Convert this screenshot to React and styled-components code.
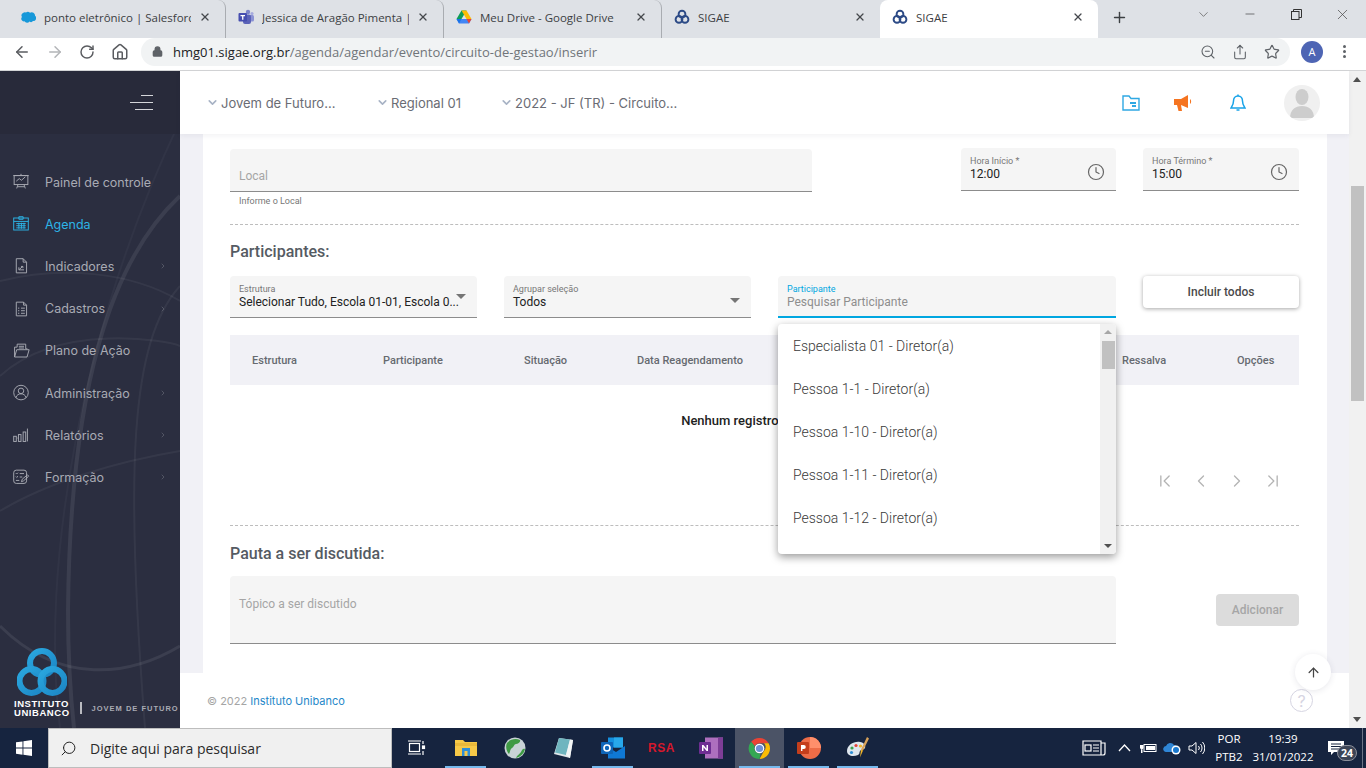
import React from "react";
import styled, { createGlobalStyle } from "styled-components";
import {
  ArrowLeft,
  ArrowRight,
  RotateCw,
  Home,
  Lock,
  ZoomOut,
  Share,
  Star,
  X,
  Plus,
  ChevronDown,
  ChevronRight,
  ChevronLeft,
  ChevronFirst,
  ChevronLast,
  Minus,
  ArrowUp,
  Clock,
  Search,
} from "lucide-react";

const GlobalStyle = createGlobalStyle`
  html, body { margin: 0; padding: 0; height: 100%; overflow: hidden; }
  body { font-family: Roboto, "Liberation Sans", sans-serif; }
  #root { height: 768px; }
  * { box-sizing: border-box; }
`;

const Page = styled.div`
  width: 1366px;
  height: 768px;
  display: flex;
  flex-direction: column;
  overflow: hidden;
  background: #fff;
`;

/* chrome */
const TabBar = styled.div`
  height: 38px;
  background: #dee1e6;
  display: flex;
  padding-left: 8px;
  flex: none;
`;

const Tab = styled.div`
  width: 218px;
  height: 38px;
  display: flex;
  align-items: center;
  padding: 0 14px 4px 12px;
  gap: 8px;
  position: relative;
  background: ${(p) => (p.$active ? "#fff" : "transparent")};
  border-radius: 8px 8px 0 0;
  border-right: ${(p) => (p.$sep ? "1px solid #a9acb1" : "none")};
  background-clip: ${(p) => (p.$active ? "border-box" : "padding-box")};
`;

const TabTitle = styled.span`
  flex: 1;
  font-family: "Open Sans", sans-serif;
  font-size: 11.5px;
  color: #3c4043;
  white-space: nowrap;
  overflow: hidden;
`;

const NewTab = styled.div`
  width: 42px;
  display: flex;
  align-items: center;
  justify-content: center;
  padding-bottom: 4px;
  color: #3c4043;
`;

const WindowControls = styled.div`
  margin-left: auto;
  display: flex;
  align-items: flex-start;
  color: #444;
`;

const WinButton = styled.div`
  width: 46.5px;
  height: 28px;
  display: flex;
  align-items: center;
  justify-content: center;
`;

const Toolbar = styled.div`
  height: 33px;
  flex: none;
  display: flex;
  padding: 0 0 5px 6px;
  border-bottom: 1px solid #d3d4d6;
  align-items: center;
`;

const NavButton = styled.div`
  width: 32.5px;
  display: flex;
  justify-content: center;
  color: ${(p) => (p.$off ? "#b3b5b8" : "#5a5c60")};
`;

const Omnibox = styled.div`
  width: 1149px;
  height: 28px;
  margin-left: 5px;
  background: #f1f3f4;
  border-radius: 14px;
  display: flex;
  align-items: center;
  padding: 0 10px 0 11px;
  color: #5f6368;
`;

const Url = styled.div`
  margin-left: 10px;
  font-family: "Open Sans", sans-serif;
  font-size: 13px;
  color: #70757a;
  flex: 1;
  span { color: #202124; }
`;

const OmniIcons = styled.div`
  display: flex;
  gap: 16px;
  align-items: center;
`;

const ProfileDot = styled.div`
  width: 22px;
  height: 22px;
  margin-left: 11px;
  border-radius: 50%;
  background: #4e65b4;
  color: #fff;
  font-size: 11px;
  display: flex;
  align-items: center;
  justify-content: center;
  font-family: "Open Sans", sans-serif;
`;

const Dots = styled.div`
  margin-left: 20px;
  display: flex;
  flex-direction: column;
  gap: 2px;
  i { width: 3px; height: 3px; border-radius: 50%; background: #5f6368; }
`;

/* app */
const AppArea = styled.div`
  flex: 1;
  min-height: 0;
  display: flex;
  position: relative;
`;

const Sidebar = styled.aside`
  width: 180px;
  flex: none;
  background: #2b2e40;
  display: flex;
  flex-direction: column;
  position: relative;
  overflow: hidden;
`;

const SidebarArt = styled.svg`
  position: absolute;
  left: 0;
  top: 0;
  pointer-events: none;
`;

const SidebarHead = styled.div`
  height: 63px;
  flex: none;
  background: #282a3a;
  display: flex;
  align-items: center;
  justify-content: flex-end;
  padding-right: 27px;
  position: relative;
`;

const Burger = styled.div`
  width: 23px;
  display: flex;
  flex-direction: column;
  align-items: flex-end;
  gap: 6px;
  i { display: block; height: 1px; background: #d5d6da; }
  i:nth-child(1) { width: 12px; }
  i:nth-child(2) { width: 23px; }
  i:nth-child(3) { width: 18px; }
`;

const Nav = styled.nav`
  margin-top: 27px;
  position: relative;
`;

const NavItem = styled.div`
  height: 42.2px;
  display: flex;
  align-items: center;
  padding-left: 12px;
  color: ${(p) => (p.$active ? "#2db4e6" : "#a9abb4")};
  font-family: Inter, sans-serif;
  font-size: 12.5px;
  position: relative;
`;

const NavLabel = styled.span`
  margin-left: 15px;
  flex: 1;
`;

const NavCaret = styled.span`
  width: 21px;
  display: flex;
  color: #666977;
`;

const BrandBlock = styled.div`
  margin-top: auto;
  padding: 0 0 11px 14px;
  position: relative;
  display: flex;
  flex-direction: column;
`;

const BrandRow = styled.div`
  display: flex;
  align-items: center;
  margin-top: 1px;
`;

const BrandName = styled.div`
  font-family: "Liberation Sans", sans-serif;
  font-weight: 700;
  font-size: 9.5px;
  line-height: 9px;
  letter-spacing: 0.55px;
  color: #fff;
`;

const BrandDivider = styled.div`
  width: 2px;
  height: 12px;
  background: #b9bac0;
  margin: 0 10px;
`;

const BrandTag = styled.div`
  font-family: "Liberation Sans", sans-serif;
  font-weight: 700;
  font-size: 7.5px;
  letter-spacing: 1px;
  color: #a9abb4;
  white-space: nowrap;
`;

const Main = styled.main`
  flex: 1;
  min-width: 0;
  display: flex;
  flex-direction: column;
  background: #f1f1f6;
  position: relative;
`;

const TopBar = styled.header`
  height: 63px;
  flex: none;
  background: #fff;
  display: flex;
  align-items: center;
  padding: 0 29px 0 26px;
  box-shadow: 0 2px 5px rgba(40, 40, 70, 0.06);
  position: relative;
  z-index: 2;
`;

const Crumb = styled.div`
  width: ${(p) => p.$w}px;
  display: flex;
  align-items: center;
  gap: 2px;
  font-family: Inter, sans-serif;
  font-size: 13px;
  color: #6a6c74;
  white-space: nowrap;
  svg { color: #a8b3c5; flex: none; }
`;

const TopIcons = styled.div`
  margin-left: auto;
  display: flex;
  align-items: center;
`;

const TopIcon = styled.div`
  width: ${(p) => p.$w}px;
  display: flex;
  justify-content: center;
`;

const UserBubble = styled.div`
  width: 36px;
  height: 36px;
  border-radius: 50%;
  background: #f0f0f0;
  margin-left: 19px;
  display: flex;
  align-items: center;
  justify-content: center;
  overflow: hidden;
`;

const Scroller = styled.div`
  flex: 1;
  min-height: 0;
  overflow: hidden;
  padding: 0 22px 0 23px;
`;

const Card = styled.section`
  background: #fff;
  padding: 14px 28px 0 27px;
  height: 620px;
`;

const TopRow = styled.div`
  display: flex;
  justify-content: space-between;
  align-items: flex-start;
`;

const FieldBox = styled.div`
  position: relative;
  width: ${(p) => p.$w}px;
  height: ${(p) => p.$h}px;
  background: #f5f5f5;
  border-radius: 4px 4px 0 0;
  border-bottom: ${(p) => (p.$focus ? "2px solid #00a7e1" : "1px solid #8c8c8c")};
  padding: ${(p) => p.$pad || "8px 9px 0"};
  display: flex;
  flex-direction: column;
`;

const LocalColumn = styled.div`
  margin-top: 1px;
`;

const Placeholder = styled.div`
  font-size: 12px;
  line-height: 14px;
  color: ${(p) => p.$c || "#a5a5a5"};
`;

const Helper = styled.div`
  font-size: 9px;
  color: #777;
  padding: 3px 9px 0;
  line-height: 12px;
`;

const TimeFields = styled.div`
  display: flex;
  gap: 27px;
`;

const MiniLabel = styled.div`
  font-size: 9px;
  line-height: 11px;
  color: ${(p) => p.$c || "#777"};
`;

const FieldValue = styled.div`
  font-size: 12px;
  line-height: 14px;
  color: #222;
  white-space: nowrap;
`;

const FieldIcon = styled.div`
  position: absolute;
  right: 11px;
  top: 15px;
  color: #666;
  display: flex;
`;

const Caret = styled.div`
  position: absolute;
  right: ${(p) => p.$r}px;
  top: ${(p) => p.$t}px;
  width: 0;
  height: 0;
  border-left: 5px solid transparent;
  border-right: 5px solid transparent;
  border-top: 5px solid #757575;
`;

const Dashed = styled.div`
  border-top: 1px dashed #bdbdbd;
  margin-top: ${(p) => p.$mt}px;
`;

const SectionTitle = styled.h3`
  margin: ${(p) => p.$mt}px 0 ${(p) => p.$mb}px;
  font-size: 16px;
  line-height: 20px;
  font-weight: 500;
  color: #555b63;
`;

const FilterRow = styled.div`
  display: flex;
  gap: 27px;
  align-items: flex-start;
`;

const IncludeButton = styled.button`
  width: 156px;
  height: 32px;
  border: none;
  background: #fff;
  border-radius: 4px;
  font-family: Roboto, sans-serif;
  font-weight: 500;
  font-size: 12px;
  color: #4a4a4a;
  box-shadow: 0 1px 4px rgba(0, 0, 0, 0.35);
`;

const Dropdown = styled.div`
  position: absolute;
  left: 0;
  top: 48px;
  width: 338px;
  height: 230px;
  background: #fff;
  border-radius: 4px;
  box-shadow: 0 3px 9px rgba(0, 0, 0, 0.4);
  z-index: 5;
  display: flex;
  overflow: hidden;
`;

const OptionList = styled.div`
  flex: 1;
  padding-top: 0;
`;

const Option = styled.div`
  height: 43px;
  padding-left: 15px;
  display: flex;
  align-items: center;
  font-size: 14px;
  font-weight: 300;
  color: #3a3a3a;
`;

const DropScroll = styled.div`
  width: 16px;
  background: #f1f1f1;
  position: relative;
  padding-top: 17px;
  display: flex;
  justify-content: center;
`;

const DropThumb = styled.div`
  width: 13px;
  height: 28px;
  background: #c1c1c1;
`;

const ArrowGlyph = styled.div`
  position: absolute;
  left: 4px;
  width: 0;
  height: 0;
  border-left: 4px solid transparent;
  border-right: 4px solid transparent;
  ${(p) =>
    p.$up
      ? "top: 6px; border-bottom: 4px solid #a6a6a6;"
      : "bottom: 6px; border-top: 4px solid #505050;"}
`;

const TableHead = styled.div`
  margin-top: 17px;
  height: 50px;
  background: #f1f1f6;
  display: grid;
  grid-template-columns: 131px 141px 113px 485px 115px 1fr;
  align-items: center;
  padding-left: 22px;
  font-size: 11px;
  font-weight: 500;
  color: #666a70;
`;

const EmptyRow = styled.div`
  height: 71px;
  display: flex;
  align-items: center;
  justify-content: center;
  font-size: 13px;
  font-weight: 500;
  color: #222;
`;

const Pager = styled.div`
  height: 50px;
  display: flex;
  align-items: center;
  justify-content: flex-end;
  padding-right: 8px;
  color: #b4b4b4;
`;

const PagerCount = styled.span`
  font-size: 12px;
  color: #2d8fd0;
  margin-right: 38px;
`;

const PagerIcon = styled.div`
  width: 36px;
  display: flex;
  justify-content: center;
`;

const TopicRow = styled.div`
  display: flex;
  align-items: center;
  justify-content: space-between;
`;

const AddButton = styled.button`
  width: 83px;
  height: 32px;
  border: none;
  border-radius: 4px;
  background: #dcdcdc;
  color: #a6a6a6;
  font-family: Roboto, sans-serif;
  font-size: 12px;
  font-weight: 500;
`;

const ClippedLine = styled.div`
  margin-top: 28px;
  padding-left: 70px;
  font-size: 15px;
  font-weight: 500;
  color: #555;
  white-space: nowrap;
`;

const Footer = styled.footer`
  height: 55px;
  flex: none;
  background: #fff;
  display: flex;
  align-items: center;
  justify-content: space-between;
  padding: 0 36px 0 27px;
  font-family: Inter, sans-serif;
  font-size: 11px;
  color: #a5a5a5;
  position: relative;
  z-index: 2;
  a { color: #1f88c9; text-decoration: none; }
`;

const HelpCircle = styled.div`
  width: 23px;
  height: 23px;
  border-radius: 50%;
  border: 1.5px solid #d6d5e2;
  color: #d6d5e2;
  font-size: 16px;
  display: flex;
  align-items: center;
  justify-content: center;
`;

const UpButton = styled.div`
  position: absolute;
  right: 18px;
  bottom: 38px;
  width: 36px;
  height: 36px;
  border-radius: 50%;
  background: #fff;
  color: #444;
  display: flex;
  align-items: center;
  justify-content: center;
  box-shadow: 0 1px 6px rgba(60, 60, 90, 0.12);
  z-index: 3;
`;

const PageScroll = styled.div`
  width: 17px;
  flex: none;
  background: #f1f1f1;
  position: relative;
  padding-top: 115px;
  display: flex;
  justify-content: center;
`;

const PageThumb = styled.div`
  width: 13px;
  height: 215px;
  background: #c1c1c1;
`;

const PageArrow = styled.div`
  position: absolute;
  left: 4px;
  width: 0;
  height: 0;
  border-left: 4.5px solid transparent;
  border-right: 4.5px solid transparent;
  ${(p) =>
    p.$up
      ? "top: 6px; border-bottom: 5px solid #505050;"
      : "bottom: 6px; border-top: 5px solid #505050;"}
`;

/* windows taskbar */
const Taskbar = styled.div`
  height: 40px;
  flex: none;
  background: #16243f;
  display: flex;
  align-items: stretch;
  color: #fff;
`;

const StartButton = styled.div`
  width: 48px;
  display: flex;
  align-items: center;
  justify-content: center;
`;

const SearchBox = styled.div`
  width: 344px;
  background: #f0f0f0;
  border: 1px solid #bdbdbd;
  display: flex;
  align-items: center;
  padding-left: 11px;
  gap: 13px;
  font-family: "Open Sans", sans-serif;
  font-size: 14px;
  color: #2b2b2b;
  svg { transform: scaleX(-1); color: #222; }
`;

const TaskTile = styled.div`
  width: 49px;
  position: relative;
  display: flex;
  align-items: center;
  justify-content: center;
  background: ${(p) => (p.$current ? "#4b5366" : "transparent")};
  &::after {
    content: "";
    display: ${(p) => (p.$open ? "block" : "none")};
    position: absolute;
    left: 4px;
    right: 4px;
    bottom: 0;
    height: 2px;
    background: #76b9ed;
  }
`;

const RsaMark = styled.span`
  font-family: "Liberation Sans", sans-serif;
  font-weight: 700;
  font-size: 12px;
  letter-spacing: 0.5px;
  color: #d6182c;
`;

const Tray = styled.div`
  margin-left: auto;
  display: flex;
  align-items: center;
  font-family: "Open Sans", sans-serif;
  font-size: 11.5px;
  position: relative;
`;

const TrayIcon = styled.div`
  width: ${(p) => p.$w || 24}px;
  display: flex;
  justify-content: center;
  align-items: center;
`;

const TrayText = styled.div`
  width: ${(p) => p.$w}px;
  text-align: center;
  line-height: 18px;
`;

const Notice = styled.div`
  width: 46px;
  position: relative;
  display: flex;
  justify-content: center;
  padding-right: 6px;
`;

const NoticeBadge = styled.div`
  position: absolute;
  left: 21px;
  top: 4px;
  width: 20px;
  height: 16px;
  border-radius: 9px;
  background: #3c4456;
  border: 1px solid #8b8f9a;
  font-size: 10.5px;
  font-weight: 700;
  line-height: 14px;
  text-align: center;
`;

const ShowDesktop = styled.div`
  width: 4px;
  align-self: stretch;
  border-left: 1px solid #6b7486;
`;

const tabs = [
  { title: "ponto eletrônico | Salesforce", icon: "sf", sep: true },
  { title: "Jessica de Aragão Pimenta | Micr", icon: "teams", sep: true },
  { title: "Meu Drive - Google Drive", icon: "drive", sep: true },
  { title: "SIGAE", icon: "sigae" },
  { title: "SIGAE", icon: "sigae", active: true },
];

const Favicon = ({ kind }) => {
  if (kind === "sf")
    return (
      <svg width="16" height="16" viewBox="0 0 16 16">
        <path d="M6 3.5a3 3 0 0 1 4 .3 3.2 3.2 0 0 1 5 3 2.9 2.9 0 0 1-2 5.2 2.6 2.6 0 0 1-3.5.6 3 3 0 0 1-5-.3A2.6 2.6 0 0 1 2 8a2.6 2.6 0 0 1 1-4 3 3 0 0 1 3-.5z" fill="#1798d9" />
      </svg>
    );
  if (kind === "teams")
    return (
      <svg width="16" height="16" viewBox="0 0 16 16">
        <circle cx="10" cy="3" r="2.2" fill="#7b83c9" />
        <circle cx="14" cy="4.5" r="1.6" fill="#a4a9de" />
        <rect x="11" y="6" width="5" height="6.5" rx="1.5" fill="#8b92d4" />
        <rect x="5" y="5.5" width="8" height="9.5" rx="2" fill="#5a62b8" />
        <rect x="0.5" y="4" width="8.5" height="8.5" rx="1" fill="#464eb0" />
        <path d="M2.5 6h4.5v1.2H5.4v3.6H4.1V7.2H2.5z" fill="#fff" />
      </svg>
    );
  if (kind === "drive")
    return (
      <svg width="16" height="16" viewBox="0 0 16 16">
        <path d="M5.5 1.5h5l-5 8.5H.5z" fill="#0f9d58" />
        <path d="M10.5 1.5l5 8.5h-5l-5-8.5z" fill="#fbbc04" />
        <path d="M.5 10h15l-2.5 4.5H3z" fill="#4285f4" />
        <path d="M.5 10h5L3 14.5z" fill="#1a73e8" />
        <path d="M10.5 10h5L13 14.5z" fill="#ea4335" />
      </svg>
    );
  return (
    <svg width="16" height="16" viewBox="0 0 16 16" fill="none" stroke="#2c4a86" strokeWidth="1.9">
      <circle cx="8" cy="5.2" r="3.4" />
      <circle cx="5" cy="10.4" r="3.4" />
      <circle cx="11" cy="10.4" r="3.4" />
    </svg>
  );
};

const menuIcons = {
  board: (
    <>
      <rect x="2.5" y="3" width="16" height="10.5" />
      <path d="M1.5 3h18M5 9.5l3.5-3 2.5 2 4.5-4M7 13.5L5.5 18M14 13.5l1.5 4.5M6.5 16h8M10.5 1v2" />
    </>
  ),
  calendar: (
    <>
      <rect x="2" y="3.5" width="17" height="14" />
      <path d="M2 7.5h17M8 2h5v3H8zM5 10h11M5 12.5h11M5 15h11M8 9v7M11 9v7M14 9v7" />
    </>
  ),
  doc: (
    <>
      <path d="M5 2h8l4 4v12.5H5zM13 2v4h4" />
      <path d="M8 15h6M8 15v-3M8.5 14.5l4-3.5M10.5 11h2.2v2" />
    </>
  ),
  form: (
    <>
      <path d="M5 2.5h8.5L17 6v12.5H5zM13.5 2.5V6H17" />
      <path d="M10.5 9.5H15M10.5 12.5H15M10.5 15.5H15M7 9.5h1.5M7 12.5h1.5M7 15.5h1.5" />
    </>
  ),
  folder: (
    <>
      <path d="M3 17.5V6h3V2.5h10V8h2" />
      <path d="M8 5h6M8 7h6" />
      <path d="M3 17.5h14.5L20 9H5.5z" />
    </>
  ),
  user: (
    <>
      <circle cx="10.5" cy="10" r="8.5" />
      <circle cx="10.5" cy="8" r="3.2" />
      <path d="M4.5 16c1-3.5 3.500-4.500 6-4.500s5 1 6 4.500" />
    </>
  ),
  chart: (
    <>
      <rect x="2" y="12" width="3" height="6" />
      <rect x="7" y="14" width="0.1" height="0.1" />
      <rect x="7.500" y="10" width="3" height="8" />
      <rect x="13" y="7" width="3" height="11" />
      <path d="M18 3v15" />
    </>
  ),
  task: (
    <>
      <rect x="2" y="2.500" width="15" height="15.500" rx="3" />
      <path d="M4.500 6l1 1 1.500-1.500M4.500 10l1 1 1.500-1.500M9 6.500h5M9 10.500h3M4.500 14.500h4M11 16l1-3 6-5 1.500 1.500-6 5.500z" />
    </>
  ),
};

const menu = [
  { label: "Painel de controle", icon: "board" },
  { label: "Agenda", icon: "calendar", active: true },
  { label: "Indicadores", icon: "doc", more: true },
  { label: "Cadastros", icon: "form", more: true },
  { label: "Plano de Ação", icon: "folder" },
  { label: "Administração", icon: "user", more: true },
  { label: "Relatórios", icon: "chart", more: true },
  { label: "Formação", icon: "task", more: true },
];

const columns = ["Estrutura", "Participante", "Situação", "Data Reagendamento", "Ressalva", "Opções"];

const options = [
  "Especialista 01 - Diretor(a)",
  "Pessoa 1-1 - Diretor(a)",
  "Pessoa 1-10 - Diretor(a)",
  "Pessoa 1-11 - Diretor(a)",
  "Pessoa 1-12 - Diretor(a)",
];

const BrandLogo = () => (
  <svg width="50" height="50" viewBox="0 0 50 50" fill="none" style={{ marginLeft: 3 }}>
    <defs>
      <linearGradient id="lg" x1="0" y1="0" x2="1" y2="1">
        <stop offset="0" stopColor="#2aa7df" />
        <stop offset="1" stopColor="#1c86c4" />
      </linearGradient>
    </defs>
    <g stroke="url(#lg)" strokeWidth="6">
      <circle cx="25" cy="15" r="12" />
      <circle cx="14.500" cy="33" r="12" />
      <circle cx="35.500" cy="33" r="12" />
    </g>
  </svg>
);

const TaskIcons = {
  view: (
    <svg width="18" height="16" viewBox="0 0 18 16" fill="none" stroke="#fff" strokeWidth="1.2">
      <rect x="1.500" y="3.500" width="10" height="8" />
      <path d="M0 1h13M0 14h13M15 1v3M15 11v4" />
      <rect x="14.500" y="6" width="2" height="2.500" fill="#fff" />
    </svg>
  ),
  folder: (
    <svg width="22" height="18" viewBox="0 0 22 18">
      <path d="M0 1h8l2 2h12v14H0z" fill="#f7c948" />
      <rect x="0" y="4" width="22" height="3" fill="#eab93a" />
      <rect x="7" y="9" width="8" height="8" fill="#2f8fd6" />
      <rect x="9.500" y="12" width="3" height="5" fill="#f7c948" />
    </svg>
  ),
  globe: (
    <svg width="22" height="22" viewBox="0 0 22 22">
      <circle cx="11" cy="11" r="10.500" fill="#c9d3d6" />
      <path d="M3 6c3-4 9-5 13-3 1 2-2 4-4 4s-2 3-4 4-2 5-3 6C3 15 1 10 3 6zM12 21c4-1 8-4 9-9-2-1-3 1-4 3s-4 3-5 6z" fill="#3f9a44" />
    </svg>
  ),
  note: (
    <svg width="22" height="22" viewBox="0 0 22 22">
      <path d="M6 1l14 2-3 18L1 17z" fill="#dfe7ea" />
      <path d="M6 1l11 1.500L13 18 2 15.500z" fill="#6fb5bf" />
      <path d="M13 18l4 3 3-18-3-.5z" fill="#f2f5f5" />
    </svg>
  ),
  outlook: (
    <svg width="24" height="22" viewBox="0 0 24 22">
      <rect x="7" y="0.500" width="15" height="10" fill="#1490df" />
      <rect x="13" y="0.500" width="9" height="10" fill="#28a8ea" />
      <path d="M7 10l8 5 9-6v12.500H7z" fill="#0f78d4" />
      <rect x="0" y="5" width="12" height="12" rx="1" fill="#0e65b8" />
      <circle cx="6" cy="11" r="3" fill="none" stroke="#fff" strokeWidth="1.600" />
    </svg>
  ),
  onenote: (
    <svg width="24" height="22" viewBox="0 0 24 22">
      <rect x="6" y="0.500" width="18" height="21" fill="#ad6fbe" />
      <rect x="19" y="0.500" width="5" height="21" fill="#7d3d96" />
      <rect x="0" y="5" width="12" height="12" rx="1" fill="#6d2e92" />
      <path d="M3 14V8h1.500l3 3.800V8H9v6H7.600L4.500 10.200V14z" fill="#fff" />
    </svg>
  ),
  chrome: (
    <svg width="23" height="23" viewBox="0 0 48 48">
      <path d="M24 2a22 22 0 0 1 19 11H24a11 11 0 0 0-10 6L6.500 10A22 22 0 0 1 24 2z" fill="#ea4335" />
      <path d="M43 13a22 22 0 0 1-19 33l9.500-17a11 11 0 0 0 0-16z" fill="#fbbc04" />
      <path d="M24 46A22 22 0 0 1 6.500 10L14 19a11 11 0 0 0 12 15z" fill="#34a853" />
      <circle cx="24" cy="24" r="10" fill="#fff" />
      <circle cx="24" cy="24" r="7.500" fill="#6f8fd8" />
    </svg>
  ),
  ppt: (
    <svg width="24" height="22" viewBox="0 0 24 22">
      <circle cx="13" cy="11" r="11" fill="#ed6c47" />
      <path d="M13 0a11 11 0 0 1 11 11H13z" fill="#ff8f6b" />
      <rect x="0" y="5" width="12" height="12" rx="1" fill="#c43e1c" />
      <path d="M4 14V8h2.800a2 2 0 0 1 0 4H5.400v2z" fill="#fff" />
    </svg>
  ),
  paint: (
    <svg width="24" height="24" viewBox="0 0 24 24">
      <path d="M1 15C1 9 8 5 14 6c4 .7 6 3 5 6-1 2-4 1-5 3s0 3-2 4c-5 2-11 1-11-4z" fill="#dfe7ee" />
      <circle cx="6" cy="12" r="1.600" fill="#3fa34d" />
      <circle cx="10" cy="9.500" r="1.600" fill="#e6453a" />
      <circle cx="14.500" cy="10" r="1.600" fill="#f0b429" />
      <circle cx="5.500" cy="16.500" r="1.600" fill="#2f8fd6" />
      <path d="M21 1l2 1.500-6 12-2-1z" fill="#d8a25a" />
      <path d="M15 13.500l2 1-3 7z" fill="#f0b429" />
    </svg>
  ),
};

export default function App() {
  return (
    <Page>
      <GlobalStyle />
      <TabBar>
        {tabs.map((t, i) => (
          <Tab key={i} $active={t.active} $sep={t.sep}>
            <Favicon kind={t.icon} />
            <TabTitle>{t.title}</TabTitle>
            <X size={12} strokeWidth={2.6} color="#45484d" />
          </Tab>
        ))}
        <NewTab>
          <Plus size={17} strokeWidth={2} />
        </NewTab>
        <WindowControls>
          <WinButton>
            <ChevronDown size={15} strokeWidth={1} />
          </WinButton>
          <WinButton>
            <Minus size={14} strokeWidth={1.2} />
          </WinButton>
          <WinButton>
            <svg width="11" height="11" viewBox="0 0 11 11" fill="none" stroke="#333">
              <rect x="0.500" y="2.500" width="7.500" height="8" />
              <path d="M2.500 2.500v-2h8v8H8" />
            </svg>
          </WinButton>
          <WinButton>
            <X size={17} strokeWidth={1} />
          </WinButton>
        </WindowControls>
      </TabBar>

      <Toolbar>
        <NavButton>
          <ArrowLeft size={18} strokeWidth={2} />
        </NavButton>
        <NavButton $off>
          <ArrowRight size={18} strokeWidth={2} />
        </NavButton>
        <NavButton>
          <RotateCw size={16} strokeWidth={2.2} />
        </NavButton>
        <NavButton>
          <Home size={18} strokeWidth={2} />
        </NavButton>
        <Omnibox>
          <Lock size={11} strokeWidth={3} fill="#5f6368" />
          <Url>
            <span>hmg01.sigae.org.br</span>/agenda/agendar/evento/circuito-de-gestao/inserir
          </Url>
          <OmniIcons>
            <ZoomOut size={16} strokeWidth={1.6} />
            <Share size={16} strokeWidth={1.6} />
            <Star size={16} strokeWidth={1.8} />
          </OmniIcons>
        </Omnibox>
        <ProfileDot>A</ProfileDot>
        <Dots>
          <i />
          <i />
          <i />
        </Dots>
      </Toolbar>

      <AppArea>
        <Sidebar>
          <SidebarArt width="180" height="657" viewBox="0 0 180 657" fill="none" stroke="#fff">
            <path d="M180 125C110 190 70 320 68 540M68 540c0 40 2 80 6 117" strokeOpacity="0.08" strokeWidth="4" />
            <path d="M180 215C130 270 125 400 145 657" strokeOpacity="0.05" strokeWidth="2" />
            <path d="M0 305C60 250 170 270 180 275M0 210c60-15 130-10 180 20" strokeOpacity="0.05" strokeWidth="2" />
            <path d="M0 555c60 60 130 50 180 20" strokeOpacity="0.08" strokeWidth="3" />
            <path d="M60 657C40 500 80 260 180 50" strokeOpacity="0.03" strokeWidth="2" />
            <path d="M0 440c50-30 120-50 180-60" strokeOpacity="0.05" strokeWidth="2" />
          </SidebarArt>
          <SidebarHead>
            <Burger>
              <i />
              <i />
              <i />
            </Burger>
          </SidebarHead>
          <Nav>
            {menu.map((m) => (
              <NavItem key={m.label} $active={m.active}>
                <svg width="18" height="18" viewBox="0 0 21 21" fill="none" stroke="currentColor" strokeWidth="1.1">
                  {menuIcons[m.icon]}
                </svg>
                <NavLabel>{m.label}</NavLabel>
                <NavCaret>{m.more && <ChevronRight size={8} strokeWidth={2} />}</NavCaret>
              </NavItem>
            ))}
          </Nav>
          <BrandBlock>
            <BrandLogo />
            <BrandRow>
              <BrandName>
                INSTITUTO
                <br />
                UNIBANCO
              </BrandName>
              <BrandDivider />
              <BrandTag>JOVEM DE FUTURO</BrandTag>
            </BrandRow>
          </BrandBlock>
        </Sidebar>

        <Main>
          <TopBar>
            <Crumb $w={170}>
              <ChevronDown size={13} strokeWidth={3} />
              Jovem de Futuro...
            </Crumb>
            <Crumb $w={124}>
              <ChevronDown size={13} strokeWidth={3} />
              Regional 01
            </Crumb>
            <Crumb $w={200}>
              <ChevronDown size={13} strokeWidth={3} />
              2022 - JF (TR) - Circuito...
            </Crumb>
            <TopIcons>
              <TopIcon $w={52}>
                <svg width="18" height="16" viewBox="0 0 18 16" fill="none" stroke="#2fa8e3" strokeWidth="1.400">
                  <path d="M1 1h6l2 2.500h8V15H1z" />
                  <path d="M8 8h6M10 11h4" strokeWidth="1.800" />
                </svg>
              </TopIcon>
              <TopIcon $w={54}>
                <svg width="20" height="18" viewBox="0 0 20 18" fill="#f57420">
                  <path d="M0 5h7l7-4v13L7 11H0z" />
                  <path d="M3 11h4l1 6H4.500z" />
                  <path d="M16 5c1.500 1 1.500 4 0 5z" />
                </svg>
              </TopIcon>
              <TopIcon $w={54}>
                <svg width="16" height="18" viewBox="0 0 16 18" fill="none" stroke="#19a3e8" strokeWidth="1.500">
                  <path d="M8 2c-3 0-4.500 2.500-4.500 5 0 4-2 6-2.500 7h14c-.5-1-2.500-3-2.500-7 0-2.500-1.500-5-4.500-5z" />
                  <path d="M6.500 16h3M8 .5V2" />
                </svg>
              </TopIcon>
              <UserBubble>
                <svg width="26" height="30" viewBox="0 0 26 30" fill="#cdcdcd">
                  <ellipse cx="13" cy="9" rx="6.500" ry="8" />
                  <path d="M1 30c0-8 5-12 12-12s12 4 12 12z" />
                </svg>
              </UserBubble>
            </TopIcons>
          </TopBar>

          <Scroller>
            <Card>
              <TopRow>
                <LocalColumn>
                  <FieldBox $w={582} $h={43} $pad="20px 9px 0">
                    <Placeholder>Local</Placeholder>
                  </FieldBox>
                  <Helper>Informe o Local</Helper>
                </LocalColumn>
                <TimeFields>
                  <FieldBox $w={155} $h={43}>
                    <MiniLabel>Hora Início *</MiniLabel>
                    <FieldValue>12:00</FieldValue>
                    <FieldIcon>
                      <Clock size={18} strokeWidth={1.6} />
                    </FieldIcon>
                  </FieldBox>
                  <FieldBox $w={156} $h={43}>
                    <MiniLabel>Hora Término *</MiniLabel>
                    <FieldValue>15:00</FieldValue>
                    <FieldIcon>
                      <Clock size={18} strokeWidth={1.6} />
                    </FieldIcon>
                  </FieldBox>
                </TimeFields>
              </TopRow>

              <Dashed $mt={17} />
              <SectionTitle $mt={17} $mb={14}>
                Participantes:
              </SectionTitle>

              <FilterRow>
                <FieldBox $w={247} $h={42}>
                  <MiniLabel>Estrutura</MiniLabel>
                  <FieldValue>Selecionar Tudo, Escola 01-01, Escola 0...</FieldValue>
                  <Caret $r={11} $t={18} />
                </FieldBox>
                <FieldBox $w={247} $h={42}>
                  <MiniLabel>Agrupar seleção</MiniLabel>
                  <FieldValue>Todos</FieldValue>
                  <Caret $r={11} $t={22} />
                </FieldBox>
                <FieldBox $w={338} $h={42} $focus>
                  <MiniLabel $c="#00a7e1">Participante</MiniLabel>
                  <Placeholder $c="#8e8e8e">Pesquisar Participante</Placeholder>
                  <Dropdown>
                    <OptionList>
                      {options.map((o) => (
                        <Option key={o}>{o}</Option>
                      ))}
                    </OptionList>
                    <DropScroll>
                      <ArrowGlyph $up />
                      <DropThumb />
                      <ArrowGlyph />
                    </DropScroll>
                  </Dropdown>
                </FieldBox>
                <IncludeButton>Incluir todos</IncludeButton>
              </FilterRow>

              <TableHead>
                {columns.map((c) => (
                  <span key={c}>{c}</span>
                ))}
              </TableHead>
              <EmptyRow>Nenhum registro encontrado</EmptyRow>
              <Pager>
                <PagerCount>0</PagerCount>
                <PagerIcon>
                  <ChevronFirst size={20} strokeWidth={1.6} />
                </PagerIcon>
                <PagerIcon>
                  <ChevronLeft size={20} strokeWidth={1.6} />
                </PagerIcon>
                <PagerIcon>
                  <ChevronRight size={20} strokeWidth={1.6} />
                </PagerIcon>
                <PagerIcon>
                  <ChevronLast size={20} strokeWidth={1.6} />
                </PagerIcon>
              </Pager>

              <Dashed $mt={19} />
              <SectionTitle $mt={18} $mb={12}>
                Pauta a ser discutida:
              </SectionTitle>

              <TopicRow>
                <FieldBox $w={886} $h={68} $pad="21px 9px 0">
                  <Placeholder>Tópico a ser discutido</Placeholder>
                </FieldBox>
                <AddButton>Adicionar</AddButton>
              </TopicRow>
              <ClippedLine>Pauta cadastrada para o evento de acompanhamento do circuito</ClippedLine>
            </Card>
          </Scroller>

          <Footer>
            <span>
              © 2022 <a href="#top">Instituto Unibanco</a>
            </span>
            <HelpCircle>?</HelpCircle>
          </Footer>
          <UpButton>
            <ArrowUp size={15} strokeWidth={2} />
          </UpButton>
        </Main>

        <PageScroll>
          <PageArrow $up />
          <PageThumb />
          <PageArrow />
        </PageScroll>
      </AppArea>

      <Taskbar>
        <StartButton>
          <svg width="16" height="16" viewBox="0 0 16 16" fill="#fff">
            <path d="M0 2.300l6.500-.9v6.200H0zM7.400 1.300L16 0v7.600H7.400zM0 8.500h6.500v6.200L0 13.700zM7.400 8.500H16V16l-8.600-1.200z" />
          </svg>
        </StartButton>
        <SearchBox>
          <Search size={17} strokeWidth={1.4} />
          Digite aqui para pesquisar
        </SearchBox>
        <TaskTile>{TaskIcons.view}</TaskTile>
        <TaskTile $open>{TaskIcons.folder}</TaskTile>
        <TaskTile>{TaskIcons.globe}</TaskTile>
        <TaskTile>{TaskIcons.note}</TaskTile>
        <TaskTile $open>{TaskIcons.outlook}</TaskTile>
        <TaskTile>
          <RsaMark>RSA</RsaMark>
        </TaskTile>
        <TaskTile>{TaskIcons.onenote}</TaskTile>
        <TaskTile $current $open>
          {TaskIcons.chrome}
        </TaskTile>
        <TaskTile $open>{TaskIcons.ppt}</TaskTile>
        <TaskTile $open>{TaskIcons.paint}</TaskTile>
        <Tray>
          <TrayIcon $w={36}>
            <svg width="24" height="16" viewBox="0 0 24 16" fill="none" stroke="#fff" strokeWidth="1.200">
              <path d="M1 1h18v14H1zM19 3h4v10a2 2 0 0 1-2 2h-2" />
              <rect x="3" y="5" width="6" height="6" />
              <path d="M11 5h6M11 8h6M11 11h6" />
            </svg>
          </TrayIcon>
          <TrayIcon>
            <svg width="13" height="8" viewBox="0 0 13 8" fill="none" stroke="#fff" strokeWidth="1.300">
              <path d="M1 7l5.500-6L12 7" />
            </svg>
          </TrayIcon>
          <TrayIcon>
            <svg width="17" height="12" viewBox="0 0 17 12" fill="#fff">
              <rect x="4" y="2.500" width="12" height="7" fill="none" stroke="#fff" />
              <rect x="6" y="4" width="9" height="4" />
              <path d="M0 3h3.500v3L2 8H1.500L0 6z" />
              <rect x="1" y="8" width="1.500" height="3" />
            </svg>
          </TrayIcon>
          <TrayIcon>
            <svg width="18" height="14" viewBox="0 0 18 14">
              <path d="M1 10a3 3 0 0 1 2-5 4.500 4.500 0 0 1 8-1 3 3 0 0 1 3 3v4H3a2.500 2.500 0 0 1-2-1z" fill="#2f86d6" />
              <circle cx="13" cy="9" r="4.500" fill="#fff" />
              <circle cx="13" cy="9" r="3" fill="#1878cf" />
            </svg>
          </TrayIcon>
          <TrayIcon>
            <svg width="17" height="14" viewBox="0 0 17 14" fill="none" stroke="#fff" strokeWidth="1">
              <path d="M1 5h3l4-3.500v11L4 9H1z" />
              <path d="M10.500 5a3 3 0 0 1 0 4M12.500 3a6 6 0 0 1 0 8M14.500 1a9 9 0 0 1 0 12" />
            </svg>
          </TrayIcon>
          <TrayText $w={42}>
            POR
            <br />
            PTB2
          </TrayText>
          <TrayText $w={66}>
            19:39
            <br />
            31/01/2022
          </TrayText>
          <Notice>
            <svg width="16" height="14" viewBox="0 0 16 14">
              <path d="M0 0h16v11H6l-3 3v-3H0z" fill="#fff" />
              <path d="M3 3h10M3 5.500h10M3 8h10" stroke="#16243f" />
            </svg>
            <NoticeBadge>24</NoticeBadge>
          </Notice>
          <ShowDesktop />
        </Tray>
      </Taskbar>
    </Page>
  );
}
